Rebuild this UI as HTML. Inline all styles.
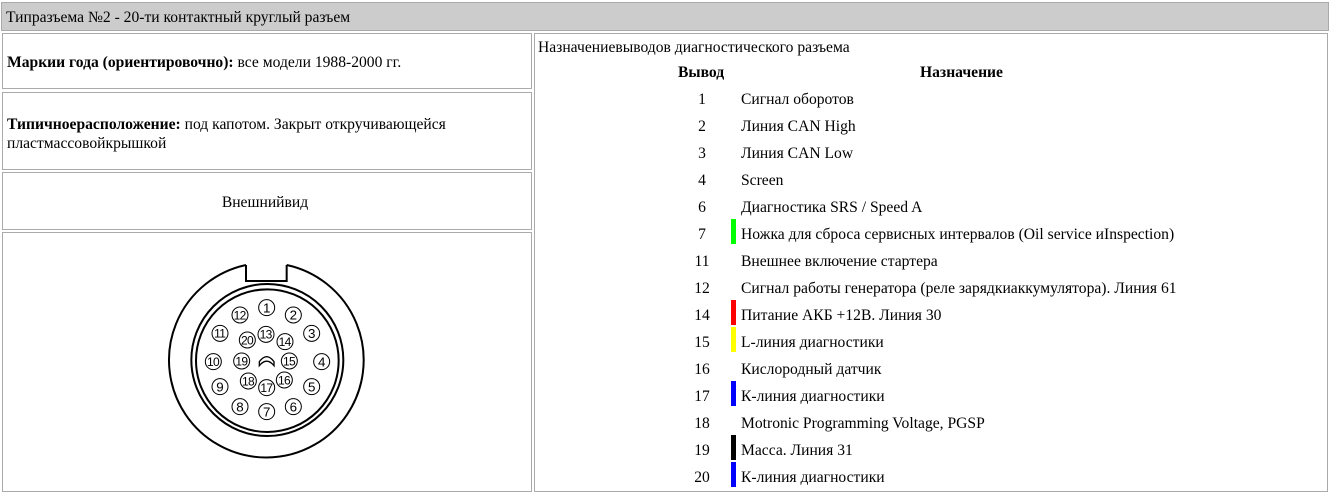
<!DOCTYPE html>
<html><head><meta charset="utf-8"><style>
body{margin:0;width:1330px;height:493px;background:#fff;font-family:"Liberation Serif","Noto Serif CJK SC",serif;font-size:15.6px;color:#000;position:relative;overflow:hidden}
.b{position:absolute;border:1px solid #aaa;box-sizing:border-box}
.t{position:absolute;white-space:nowrap}
.n{position:absolute;width:40px;text-align:center;left:682px}
.bar{position:absolute;left:731px;width:5px;height:25px}
</style></head><body>
<div class="b" style="left:1px;top:2px;width:1328px;height:29px;background:#ccc"></div>
<div class="t" style="left:6px;top:9px">Типразъема №2 - 20-ти контактный круглый разъем</div>

<div class="b" style="left:2px;top:33px;width:530px;height:56px"></div>
<div class="t" style="left:7px;top:54px"><b>Маркии года (ориентировочно):</b> все модели 1988-2000 гг.</div>

<div class="b" style="left:2px;top:92px;width:530px;height:78px"></div>
<div class="t" style="left:7px;top:115px;line-height:19px"><b>Типичноерасположение:</b> под капотом. Закрыт откручивающейся<br>пластмассовойкрышкой</div>

<div class="b" style="left:2px;top:172px;width:530px;height:58px"></div>
<div class="t" style="left:0px;width:530px;text-align:center;top:194px">Внешнийвид</div>

<div class="b" style="left:2px;top:232px;width:530px;height:260px"></div>
<svg style="position:absolute;left:160px;top:255px" width="210" height="210" viewBox="0 0 630 630">
<g fill="none" stroke="#000" stroke-width="6">
<path d="M258 30 A292 292 0 1 0 380 30"/>
<path d="M258 30 L258 78 L380 78 L380 30"/>
<circle cx="322" cy="315" r="228"/>
<circle cx="322" cy="317" r="214"/>
<path d="M298 332 L298 320 Q320 290 342 320 L342 332 Q320 305 298 332 Z" stroke-width="4"/>
</g>
<g stroke="#000" stroke-width="3" fill="#fff">
<circle cx="320" cy="158" r="24"/><circle cx="400" cy="180" r="24"/><circle cx="455" cy="235" r="24"/><circle cx="485" cy="320" r="24"/><circle cx="455" cy="395" r="24"/><circle cx="400" cy="455" r="24"/><circle cx="320" cy="470" r="24"/><circle cx="240" cy="455" r="24"/><circle cx="180" cy="395" r="24"/><circle cx="160" cy="320" r="24"/><circle cx="180" cy="235" r="24"/><circle cx="240" cy="180" r="24"/><circle cx="318" cy="238" r="24"/><circle cx="375" cy="260" r="24"/><circle cx="388" cy="318" r="24"/><circle cx="373" cy="375" r="24"/><circle cx="320" cy="398" r="24"/><circle cx="265" cy="378" r="24"/><circle cx="245" cy="318" r="24"/><circle cx="262" cy="255" r="24"/>
</g>
<g font-family="Liberation Sans, sans-serif" font-size="40" text-anchor="middle" fill="#000">
<text x="320" y="172">1</text><text x="400" y="194">2</text><text x="455" y="249">3</text><text x="485" y="334">4</text><text x="455" y="409">5</text><text x="400" y="469">6</text><text x="320" y="484">7</text><text x="240" y="469">8</text><text x="180" y="409">9</text>
<g font-size="36" letter-spacing="-2"><text x="159" y="333">10</text><text x="179" y="248">11</text><text x="239" y="193">12</text><text x="317" y="251">13</text><text x="374" y="273">14</text><text x="387" y="331">15</text><text x="372" y="388">16</text><text x="319" y="411">17</text><text x="264" y="391">18</text><text x="244" y="331">19</text><text x="261" y="268">20</text></g>
</g>
</svg>

<div class="b" style="left:534px;top:33px;width:794px;height:459px"></div>
<div class="t" style="left:538px;top:39px">Назначениевыводов диагностического разъема</div>
<div class="t" style="left:678px;top:64px;font-weight:bold">Вывод</div>
<div class="t" style="left:920px;top:64px;font-weight:bold">Назначение</div>

<div class="n" style="top:91px">1</div><div class="t" style="left:741px;top:91px">Сигнал оборотов</div>
<div class="n" style="top:118px">2</div><div class="t" style="left:741px;top:118px">Линия CAN High</div>
<div class="n" style="top:145px">3</div><div class="t" style="left:741px;top:145px">Линия CAN Low</div>
<div class="n" style="top:172px">4</div><div class="t" style="left:741px;top:172px">Screen</div>
<div class="n" style="top:199px">6</div><div class="t" style="left:741px;top:199px">Диагностика SRS / Speed A</div>
<div class="bar" style="top:219px;background:#00ff00"></div>
<div class="n" style="top:226px">7</div><div class="t" style="left:741px;top:226px">Ножка для сброса сервисных интервалов (Oil service иInspection)</div>
<div class="n" style="top:253px">11</div><div class="t" style="left:741px;top:253px">Внешнее включение стартера</div>
<div class="n" style="top:280px">12</div><div class="t" style="left:741px;top:280px">Сигнал работы генератора (реле зарядкиаккумулятора). Линия 61</div>
<div class="bar" style="top:300px;background:#ff0000"></div>
<div class="n" style="top:307px">14</div><div class="t" style="left:741px;top:307px">Питание АКБ +12В. Линия 30</div>
<div class="bar" style="top:327px;background:#ffff00"></div>
<div class="n" style="top:334px">15</div><div class="t" style="left:741px;top:334px">L-линия диагностики</div>
<div class="n" style="top:361px">16</div><div class="t" style="left:741px;top:361px">Кислородный датчик</div>
<div class="bar" style="top:381px;background:#0000ff"></div>
<div class="n" style="top:388px">17</div><div class="t" style="left:741px;top:388px">К-линия диагностики</div>
<div class="n" style="top:415px">18</div><div class="t" style="left:741px;top:415px">Motronic Programming Voltage, PGSP</div>
<div class="bar" style="top:435px;background:#000"></div>
<div class="n" style="top:442px">19</div><div class="t" style="left:741px;top:442px">Масса. Линия 31</div>
<div class="bar" style="top:462px;background:#0000ff"></div>
<div class="n" style="top:469px">20</div><div class="t" style="left:741px;top:469px">К-линия диагностики</div>
</body></html>
